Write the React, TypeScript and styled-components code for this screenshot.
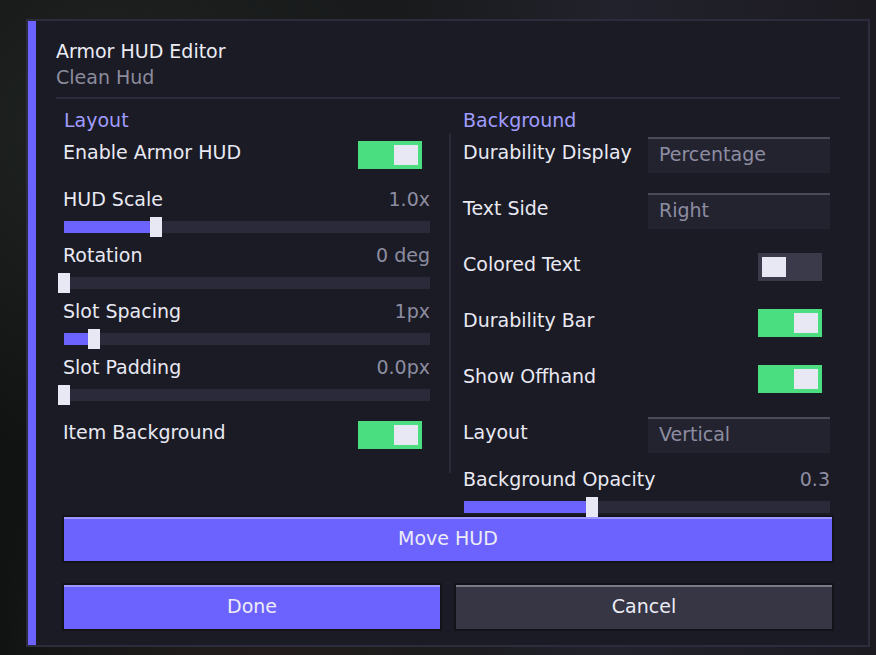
import React from "react";
import styled, { createGlobalStyle } from "styled-components";

const GlobalStyle = createGlobalStyle`
  html, body {
    margin: 0;
    padding: 0;
  }

  body {
    width: 876px;
    height: 655px;
    overflow: hidden;
    background:
      radial-gradient(circle at 12% 20%, #202422 0%, transparent 35%),
      radial-gradient(circle at 30% 96%, #231d1c 0%, transparent 30%),
      linear-gradient(90deg, #111313 0%, #181a1b 45%, #22222c 70%, #1c1b22 100%);
    font-family: "DejaVu Sans", "Liberation Sans", sans-serif;
    font-size: 19px;
    color: #e9e9f3;
  }
`;

const Screen = styled.div`
  width: 876px;
  height: 655px;
  box-sizing: border-box;
  padding: 19px 6px 8px 26px;
`;

const Panel = styled.div`
  display: flex;
  width: 844px;
  height: 628px;
  box-sizing: border-box;
  border: 2px solid #2c2c3c;
  background: #1b1b25;
`;

const Accent = styled.div`
  flex: none;
  width: 8px;
  background: #6c63ff;
`;

const Body = styled.div`
  flex: 1;
  display: flex;
  flex-direction: column;
  padding: 20px 28px 0 20px;
`;

const Title = styled.div`
  line-height: 20px;
  color: #ececf5;
`;

const Subtitle = styled.div`
  margin-top: 6px;
  line-height: 20px;
  color: #8b8b9c;
`;

const Rule = styled.div`
  height: 2px;
  margin-top: 10px;
  background: #2b2b3b;
`;

const Content = styled.div`
  margin: 11px 8px 0;
`;

const Columns = styled.div`
  display: grid;
  grid-template-columns: 385px 2px 379px;
`;

const ColumnTitle = styled.div<{ $right?: boolean }>`
  grid-column: ${(p) => (p.$right ? 3 : 1)};
  padding-left: ${(p) => (p.$right ? "12px" : "0")};
  margin-bottom: 3px;
  line-height: 20px;
  color: #a09dff;
`;

const ColumnDivider = styled.div`
  align-self: start;
  height: 340px;
  background: #2a2a38;
`;

const LeftList = styled.div`
  display: flex;
  flex-direction: column;
  padding-right: 19px;
`;

const RightList = styled.div`
  display: flex;
  flex-direction: column;
  padding-left: 13px;
`;

const Label = styled.div`
  margin-left: -1px;
  line-height: 20px;
  white-space: nowrap;
  color: #e9e9f3;
`;

const Value = styled.div`
  line-height: 20px;
  color: #8d8da1;
`;

const Row = styled.div`
  display: flex;
  justify-content: space-between;
  align-items: flex-start;
  height: 56px;

  & > ${Label} {
    margin-top: 9px;
  }
`;

const Switch = styled.div<{ $on: boolean }>`
  display: flex;
  justify-content: ${(p) => (p.$on ? "flex-end" : "flex-start")};
  width: 64px;
  height: 28px;
  box-sizing: border-box;
  margin: 8px 8px 0 0;
  padding: 4px;
  background: ${(p) => (p.$on ? "#4ade80" : "#3a3a4a")};
`;

const SwitchKnob = styled.div`
  width: 24px;
  height: 20px;
  background: #e8e8f4;
`;

const Select = styled.div`
  display: flex;
  align-items: center;
  width: 182px;
  height: 36px;
  box-sizing: border-box;
  margin-top: 4px;
  padding: 0 0 4px 11px;
  border-top: 2px solid #4a4a5a;
  background: #232330;
  line-height: 20px;
  color: #8d8da1;
`;

const SliderRow = styled.div`
  display: flex;
  flex-direction: column;
  padding-bottom: 8px;

  &:last-child {
    padding-bottom: 0;
  }
`;

const SliderHead = styled.div`
  display: flex;
  justify-content: space-between;
  height: 20px;
`;

const Track = styled.div`
  position: relative;
  height: 12px;
  margin: 12px 0 4px;
  background: #2a2a3b;
`;

const Fill = styled.div`
  height: 100%;
  background: #6c63ff;
`;

const Thumb = styled.div`
  position: absolute;
  top: -4px;
  width: 12px;
  height: 20px;
  background: #e8e8f4;
`;

const Button = styled.div<{ $tone: "accent" | "plain" }>`
  display: flex;
  align-items: center;
  justify-content: center;
  height: 44px;
  box-sizing: border-box;
  padding-bottom: 4px;
  border-top: 2px solid ${(p) => (p.$tone === "accent" ? "#9c98ff" : "#7a7a88")};
  background: ${(p) => (p.$tone === "accent" ? "#6c63ff" : "#363645")};
  box-shadow: 0 0 0 2px rgba(0, 0, 0, 0.28);
  line-height: 20px;
  color: #ececf5;
`;

const Actions = styled.div`
  display: grid;
  grid-template-columns: 1fr 1fr;
  gap: 16px;
  margin-top: 24px;
`;

const ToggleSetting = ({ label, on }: { label: string; on: boolean }) => (
  <Row>
    <Label>{label}</Label>
    <Switch $on={on}>
      <SwitchKnob />
    </Switch>
  </Row>
);

const SelectSetting = ({ label, value }: { label: string; value: string }) => (
  <Row>
    <Label>{label}</Label>
    <Select>{value}</Select>
  </Row>
);

const TRACK = 366;

const SliderSetting = ({ label, value, pos }: { label: string; value: string; pos: number }) => {
  const x = pos * TRACK;
  return (
    <SliderRow>
      <SliderHead>
        <Label>{label}</Label>
        <Value>{value}</Value>
      </SliderHead>
      <Track>
        <Fill style={{ width: Math.max(0, x - 6) }} />
        <Thumb style={{ left: x - 6 }} />
      </Track>
    </SliderRow>
  );
};

const App: React.FC = () => {
  return (
    <Screen>
      <GlobalStyle />
      <Panel>
        <Accent />
        <Body>
          <Title>Armor HUD Editor</Title>
          <Subtitle>Clean Hud</Subtitle>
          <Rule />
          <Content>
            <Columns>
              <ColumnTitle>Layout</ColumnTitle>
              <ColumnTitle $right>Background</ColumnTitle>
              <LeftList>
                <ToggleSetting label="Enable Armor HUD" on />
                <SliderSetting label="HUD Scale" value="1.0x" pos={0.251} />
                <SliderSetting label="Rotation" value="0 deg" pos={0} />
                <SliderSetting label="Slot Spacing" value="1px" pos={0.082} />
                <SliderSetting label="Slot Padding" value="0.0px" pos={0} />
                <ToggleSetting label="Item Background" on />
              </LeftList>
              <ColumnDivider />
              <RightList>
                <SelectSetting label="Durability Display" value="Percentage" />
                <SelectSetting label="Text Side" value="Right" />
                <ToggleSetting label="Colored Text" on={false} />
                <ToggleSetting label="Durability Bar" on />
                <ToggleSetting label="Show Offhand" on />
                <SelectSetting label="Layout" value="Vertical" />
                <SliderSetting label="Background Opacity" value="0.3" pos={0.35} />
              </RightList>
            </Columns>
            <Button $tone="accent">Move HUD</Button>
            <Actions>
              <Button $tone="accent">Done</Button>
              <Button $tone="plain">Cancel</Button>
            </Actions>
          </Content>
        </Body>
      </Panel>
    </Screen>
  );
};

export default App;
